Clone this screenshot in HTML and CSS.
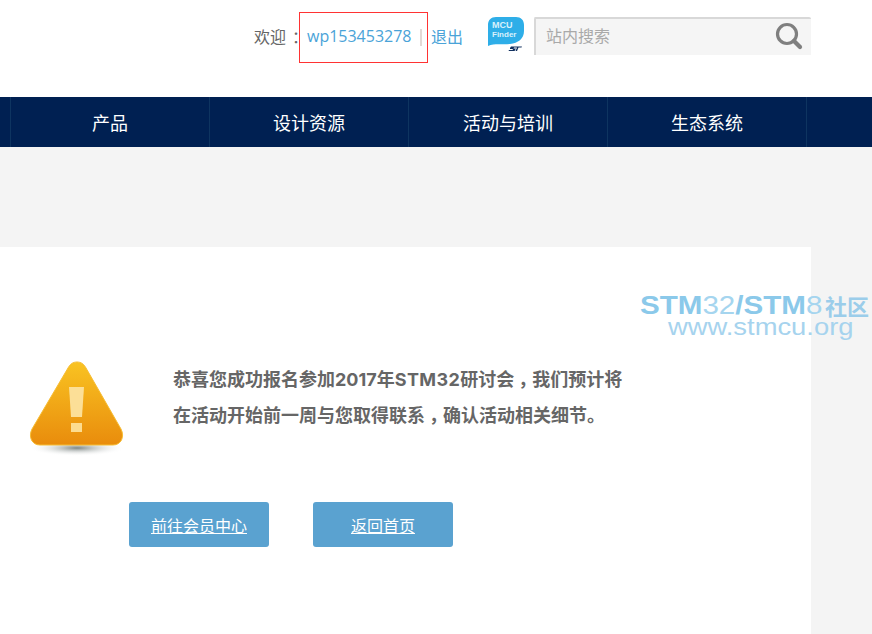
FILE: index.html
```html
<!DOCTYPE html>
<html lang="zh-CN">
<head>
<meta charset="utf-8">
<title>STM32</title>
<link rel="stylesheet" href="styles.css">
</head>
<body>
<header class="header">
  <div class="user">
    <span class="welcome">欢迎<span class="colon">：</span></span>
    <div class="user-box"><a class="link name" href="#">wp153453278</a><span class="sep"></span></div>
    <a class="link logout" href="#">退出</a>
  </div>
  <svg class="mcu" width="38" height="36" viewBox="0 0 38 36" aria-hidden="true">
    <path d="M8 0H28C33 0 36 3 36 8V14C36 22 30 26 22 27C14 28 7 26 0 29V8C0 3 3 0 8 0Z" fill="#2eaee8"/>
    <text x="4" y="11" class="mcu-text mcu-big">MCU</text>
    <text x="4" y="20" class="mcu-text">Finder</text>
    <path d="M22 31L23 29.500H34L33.500 30.500H30.500L29 34H27.500L29 30.500H26L25.500 31.500H28L26.500 34H20.500L21 33H24.500L25 32H22Z" fill="#12305f"/>
  </svg>
  <div class="search">
    <span class="placeholder">站内搜索</span>
    <svg class="search-icon" width="28" height="28" viewBox="0 0 28 28" aria-hidden="true">
      <circle cx="12" cy="12" r="9.500" fill="none" stroke="#7f7f7f" stroke-width="3.200"/>
      <path d="M19 19L25 25" stroke="#7f7f7f" stroke-width="4.200" stroke-linecap="round"/>
    </svg>
  </div>
</header>
<nav class="nav">
  <a class="nav-item" href="#">产品</a>
  <a class="nav-item" href="#">设计资源</a>
  <a class="nav-item" href="#">活动与培训</a>
  <a class="nav-item last" href="#">生态系统</a>
</nav>
<div class="band"></div>
<main class="card">
  <section class="message">
    <svg class="warn" width="100" height="98" viewBox="0 0 100 98" aria-hidden="true">
      <defs>
        <linearGradient id="warnFill" x1="0" y1="0" x2="0" y2="1">
          <stop offset="0" stop-color="#f9c322"/>
          <stop offset="1" stop-color="#e98c0c"/>
        </linearGradient>
        <radialGradient id="warnShadow">
          <stop offset="0" stop-color="#7d8684"/>
          <stop offset="1" stop-color="#ffffff" stop-opacity="0"/>
        </radialGradient>
      </defs>
      <ellipse cx="49" cy="88" rx="48" ry="8" fill="url(#warnShadow)"/>
      <path d="M49 2C53 2 56 4 58 8L93 69C97 77 93 85 85 85H12C4 85 0 77 4 69L40 8C42 4 45 2 49 2Z" fill="url(#warnFill)" stroke="#f7bd33" stroke-width="1"/>
      <path d="M41 27H56L54 57H43Z" fill="#fcdf97"/>
      <rect x="43" y="63" width="11" height="9" fill="#fcdc90"/>
    </svg>
    <p class="message-text">恭喜您成功报名参加2017年<span class="latin">STM32</span>研讨会<span class="comma">，</span>我们预计将<br>在活动开始前一周与您取得联系<span class="comma">，</span>确认活动相关细节。</p>
  </section>
  <div class="actions">
    <a class="btn" href="#">前往会员中心</a>
    <a class="btn" href="#">返回首页</a>
  </div>
</main>
<aside class="watermark">
  <div class="wm-top"><span class="wm-latin"><b>STM</b><span class="wm-thin">32</span><b>/STM</b><span class="wm-thin">8</span></span><b class="wm-cn">社区</b></div>
  <div class="wm-url">www.stmcu.org</div>
</aside>
</body>
</html>
```
FILE: styles.css
```css
* { box-sizing: border-box; }
html, body { margin: 0; height: 634px; overflow: hidden; }
body {
  position: relative;
  background: #f4f4f4;
  font-family: "Open Sans", "Noto Sans CJK SC", sans-serif;
  color: #666;
}
a { text-decoration: none; }

.header {
  height: 97px;
  background: #fff;
  display: flex;
  align-items: flex-start;
  padding: 12px 61px 0 0;
  justify-content: flex-end;
}
.user { display: flex; align-items: center; height: 51px; font-size: 16px; }
.welcome { color: #666; margin-right: 1px; padding-bottom: 4px; }
.colon { letter-spacing: -10px; padding-left: 6px; }
.user-box {
  height: 51px;
  width: 129px;
  border: 1px solid #f33;
  display: flex;
  align-items: center;
  padding-left: 7px;
}
.link { color: #4aa3d8; }
.name { padding-bottom: 4px; }
.sep { width: 2px; height: 17px; background: #e2dad6; margin: 0 0 1px 8px; }
.logout { margin-left: 3px; padding-bottom: 4px; }
.mcu { margin: 5px 8px 0 25px; }
.mcu-text { font: bold 8px "Liberation Sans", sans-serif; fill: #d8f1fc; }
.mcu-big { font-size: 9px; }
.search {
  width: 277px;
  height: 38px;
  margin-top: 5px;
  background: #f5f5f5;
  border-top: 2px solid #d8d8d8;
  border-left: 2px solid #d8d8d8;
  border-radius: 2px 2px 0 0;
  display: flex;
  align-items: center;
  justify-content: space-between;
  padding: 0 8px 0 10px;
}
.placeholder { color: #a9a9a9; font-size: 16px; padding-bottom: 4px; }
.search-icon { margin-top: -2px; }

.nav { height: 50px; background: #002052; display: flex; padding-left: 10px; }
.nav-item {
  width: 199px;
  border-left: 1px solid #0e3460;
  color: #fff;
  font-size: 18px;
  display: flex;
  align-items: center;
  justify-content: center;
}
.nav-item.last { width: 200px; border-right: 1px solid #0e3460; }

.band { height: 100px; }
.card { width: 811px; height: 387px; background: #fff; }
.message { display: flex; padding: 113px 0 0 28px; align-items: flex-start; }
.warn { flex: none; }
.message-text {
  margin: 2px 0 0 45px;
  font-family: "Inter", "Noto Sans CJK SC", sans-serif;
  font-size: 18px;
  line-height: 36px;
  font-weight: 700;
  color: #666;
}
.latin { letter-spacing: 0.400px; }
.comma { letter-spacing: -4px; padding-left: 4px; }
.actions { display: flex; gap: 44px; margin: 44px 0 0 129px; }
.btn {
  width: 140px;
  height: 45px;
  border-radius: 3px;
  background: #5aa2d0;
  color: #fff;
  font-size: 16px;
  text-decoration: underline;
  display: flex;
  align-items: center;
  justify-content: center;
}

.watermark {
  position: absolute;
  left: 640px;
  top: 293px;
  width: 232px;
  font-family: "Liberation Sans", sans-serif;
  white-space: nowrap;
  pointer-events: none;
}
.wm-top { display: flex; height: 24px; font-size: 26px; line-height: 24px; color: #8bc9ea; }
.wm-latin { display: block; width: 185px; transform: scaleX(1.137); transform-origin: left center; }
.wm-thin { color: #a5d5ef; }
.wm-cn { font-family: "Noto Sans CJK SC", sans-serif; font-size: 22px; color: #9bcdea; }
.wm-url {
  height: 20px;
  font-size: 24px;
  line-height: 20px;
  margin-left: 28px;
  color: #a6d3ee;
  transform: scaleX(1.14);
  transform-origin: left center;
}
```
